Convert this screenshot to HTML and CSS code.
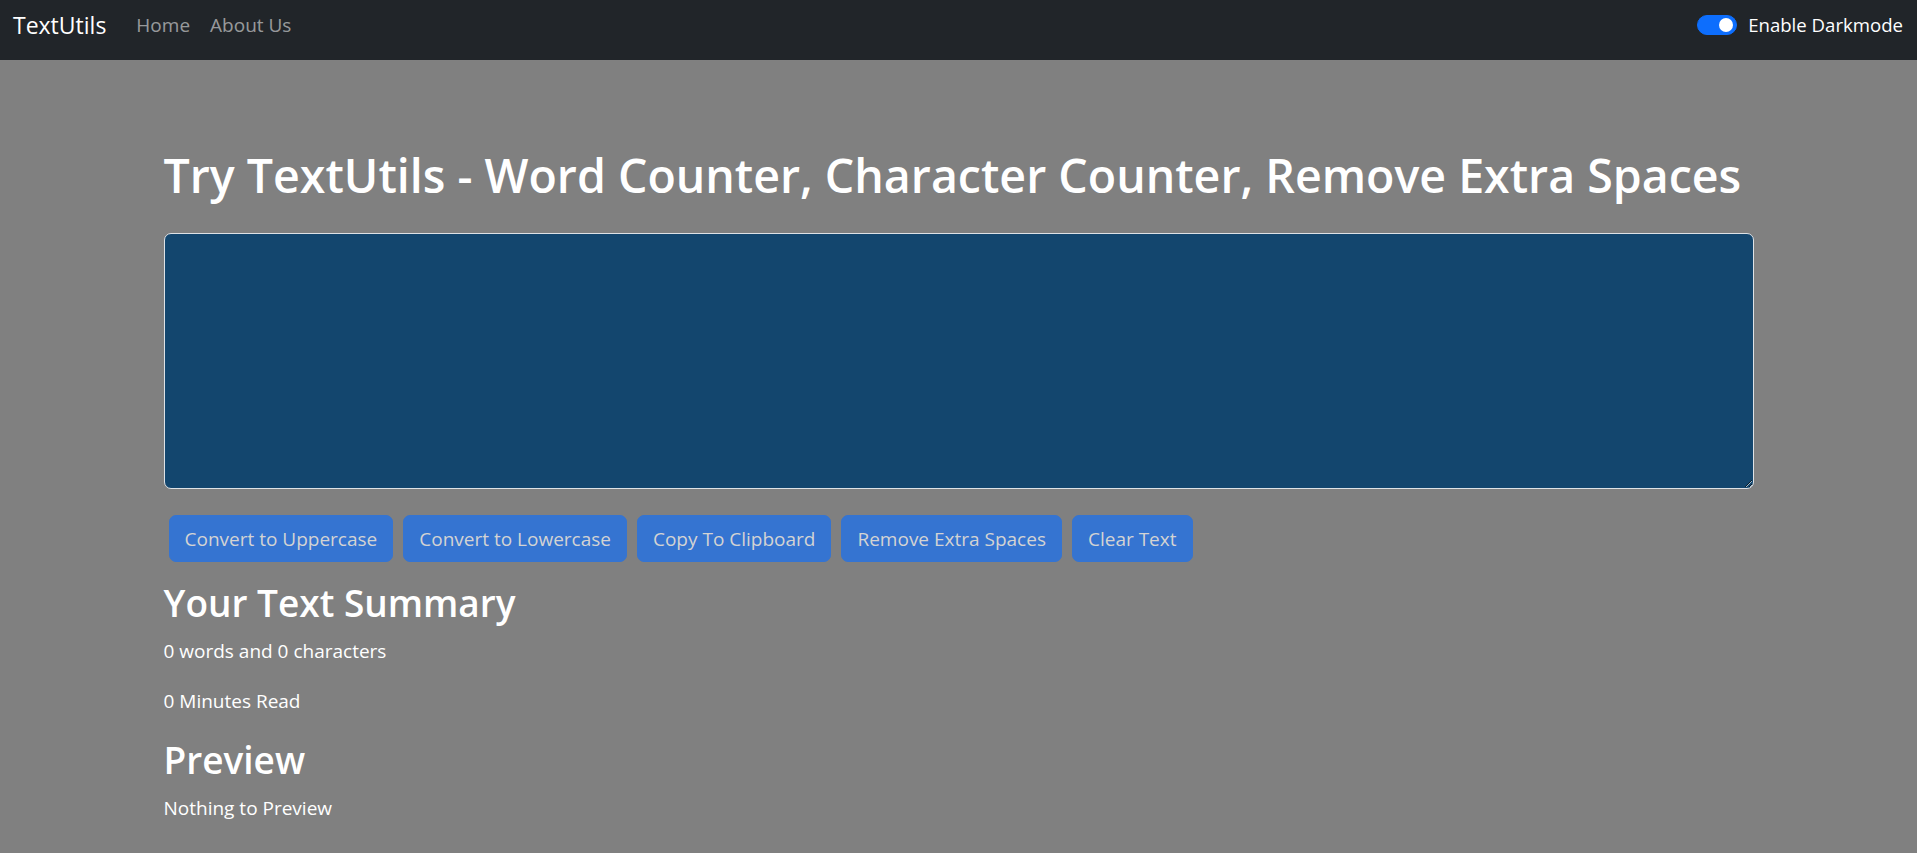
FILE: index.html
```html
<!DOCTYPE html>
<html lang="en">
<head>
<meta charset="utf-8">
<title>TextUtils</title>
<link rel="stylesheet" href="styles.css">
</head>
<body>
<nav class="navbar">
  <a class="brand" href="#">TextUtils</a>
  <ul class="nav-links">
    <li><a class="nav-link" href="#">Home</a></li>
    <li><a class="nav-link" href="#">About Us</a></li>
  </ul>
  <div class="switch-wrap">
    <span class="switch"><span class="knob"></span></span>
    <label class="switch-label">Enable Darkmode</label>
  </div>
</nav>
<main class="container">
  <h1 class="title">Try TextUtils - Word Counter, Character Counter, Remove Extra Spaces</h1>
  <textarea class="text-box" rows="8"></textarea>
  <div class="btn-row">
    <button class="btn" disabled>Convert to Uppercase</button>
    <button class="btn" disabled>Convert to Lowercase</button>
    <button class="btn" disabled>Copy To Clipboard</button>
    <button class="btn" disabled>Remove Extra Spaces</button>
    <button class="btn" disabled>Clear Text</button>
  </div>
  <section class="summary">
    <h2 class="sub">Your Text Summary</h2>
    <p class="line">0 words and 0 characters</p>
    <p class="line">0 Minutes Read</p>
    <h2 class="sub">Preview</h2>
    <p class="line last">Nothing to Preview</p>
  </section>
</main>
</body>
</html>
```
FILE: styles.css
```css
* { box-sizing: border-box; }
html, body { margin: 0; padding: 0; }
body {
  background: #808080;
  color: #ffffff;
  font-family: "Open Sans", "Noto Sans", sans-serif;
  font-size: 19px;
  line-height: 30px;
  height: 853px;
  overflow: hidden;
}
.navbar {
  height: 60px;
  background: #212529;
  display: flex;
  align-items: center;
  padding: 0 14px 11px 13px;
}
.brand {
  color: #ffffff;
  font-size: 23px;
  line-height: 30px;
  text-decoration: none;
  margin-right: 20px;
}
.nav-links {
  list-style: none;
  display: flex;
  margin: 0;
  padding: 0;
}
.nav-link {
  display: block;
  padding: 0 10px;
  color: rgba(255, 255, 255, 0.55);
  text-decoration: none;
  font-size: 19px;
  line-height: 30px;
}
.switch-wrap {
  margin-left: auto;
  display: flex;
  align-items: center;
}
.switch {
  width: 40px;
  height: 20px;
  border-radius: 10px;
  background: #0d6efd;
  border: 1px solid #0d6efd;
  display: flex;
  align-items: center;
  justify-content: flex-end;
  padding-right: 3px;
  margin-right: 11px;
}
.knob {
  width: 14px;
  height: 14px;
  border-radius: 50%;
  background: #ffffff;
}
.switch-label {
  font-size: 18.6px;
  line-height: 30px;
  color: #ffffff;
}
.container {
  width: 1590px;
  margin: 0 auto;
  padding-top: 85px;
}
.title {
  margin: 0 0 28px 0;
  font-size: 46.5px;
  line-height: 60px;
  font-weight: 600;
  white-space: nowrap;
}
.text-box {
  display: block;
  width: 100%;
  height: 256px;
  margin: 0 0 21px 0;
  background: #13466e;
  border: 1px solid #dee2e6;
  border-radius: 7px;
  color: #ffffff;
  font-family: inherit;
  font-size: 19px;
  padding: 7px 15px;
  resize: vertical;
}
.btn-row {
  display: flex;
  flex-wrap: wrap;
}
.btn {
  margin: 5px;
  font-family: inherit;
  font-size: 19px;
  line-height: 30px;
  padding: 7.5px 15px;
  border-radius: 7px;
  border: 1px solid #3574d1;
  background: #3574d1;
  color: #d3d3d3;
}
.summary {
  margin-top: 12px;
}
.sub {
  margin: 0 0 9px 0;
  font-size: 37px;
  line-height: 48px;
  font-weight: 600;
}
.line {
  margin: 0 0 20px 0;
}
.line.last {
  margin-bottom: 0;
}
```
